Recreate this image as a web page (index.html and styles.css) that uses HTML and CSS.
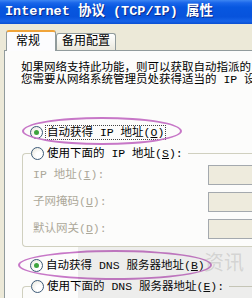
FILE: index.html
```html
<!DOCTYPE html>
<html lang="zh-CN">

<head>
  <meta charset="UTF-8">
  <meta name="viewport" content="width=device-width, initial-scale=1.0">
  <title>Internet 协议 (TCP/IP) 属性</title>
  <link rel="stylesheet" href="styles.css">
</head>

<body>
  <div class="window">
    <div class="titlebar">Internet 协议 (TCP/IP) 属性</div>
    <div class="dialog">
      <div class="tabs">
        <div class="tab active">常规</div>
        <div class="tab">备用配置</div>
      </div>
      <div class="panel">
        <p class="intro">如果网络支持此功能，则可以获取自动指派的 IP 设置。否则，<br>您需要从网络系统管理员处获得适当的 IP 设置。</p>

        <div class="option first">
          <span class="radio checked"></span>
          <span class="focus">自动获得 IP 地址(<u>O</u>)</span>
          <span class="ring ring-ip"></span>
        </div>

        <fieldset class="group">
          <legend class="option"><span class="radio"></span>使用下面的 IP 地址(<u>S</u>):</legend>
          <div class="field"><label>IP 地址(<u>I</u>):</label><span class="box"></span></div>
          <div class="field"><label>子网掩码(<u>U</u>):</label><span class="box"></span></div>
          <div class="field"><label>默认网关(<u>D</u>):</label><span class="box"></span></div>
        </fieldset>

        <div class="option dns">
          <span class="radio checked"></span>
          <span>自动获得 DNS 服务器地址(<u>B</u>)</span>
          <span class="ring ring-dns"></span>
        </div>

        <fieldset class="group last">
          <legend class="option"><span class="radio"></span>使用下面的 DNS 服务器地址(<u>E</u>):</legend>
        </fieldset>
      </div>
    </div>
    <div class="watermark">资讯</div>
  </div>
</body>

</html>
```

FILE: styles.css
```css
html,
body {
  margin: 0;
  padding: 0;
  width: 252px;
  height: 298px;
  overflow: hidden;
  background: #ece9d8;
}

.window {
  position: relative;
  width: 380px;
  height: 298px;
  font-family: "Liberation Mono", "Noto Sans CJK SC", monospace;
  font-size: 11.5px;
  line-height: 12px;
  color: #000;
}

.titlebar {
  height: 24px;
  padding-left: 5px;
  display: flex;
  align-items: center;
  font-size: 13.5px;
  font-weight: bold;
  color: #fff;
  text-shadow: 1px 1px 0 #0a2b8c;
  white-space: nowrap;
  background: linear-gradient(to bottom, #3d86f2 0%, #1a66ea 12%, #0757e0 30%, #0753dc 70%, #1663e8 88%, #0b4fd2 100%);
}

.dialog {
  padding: 5px 0 0 4px;
  background: #ece9d8;
}

.tabs {
  display: flex;
  align-items: flex-end;
  height: 21px;
  padding-left: 2px;
}

.tab {
  height: 16px;
  padding: 0 5px;
  display: flex;
  align-items: center;
  border: 1px solid #919b9c;
  border-bottom: none;
  border-radius: 3px 3px 0 0;
  background: linear-gradient(to bottom, #ffffff, #f3f2ec 60%, #e9e7dc);
  font-size: 12px;
  white-space: nowrap;
}

.tab.active {
  position: relative;
  z-index: 1;
  height: 19px;
  width: 39px;
  padding: 0 0 0 9px;
  margin-bottom: -1px;
  border-top: 2px solid #f0a43a;
  background: #fcfcfe;
}

.panel {
  height: 300px;
  border: 1px solid #919b9c;
  border-right: none;
  background: #fcfcfb;
}

.intro {
  margin: 11px 0 0 16px;
  white-space: nowrap;
}

.option {
  position: relative;
  display: flex;
  align-items: center;
  height: 21px;
  margin-left: 25px;
  white-space: nowrap;
}

.option.first {
  margin-top: 36px;
}

.option.dns {
  margin-top: 8px;
}

.radio {
  width: 11px;
  height: 11px;
  margin-right: 3px;
  border: 1px solid #3c5a78;
  border-radius: 50%;
  background: radial-gradient(circle at 65% 65%, #ffffff 30%, #e4e2d6 100%);
  display: flex;
  align-items: center;
  justify-content: center;
  flex-shrink: 0;
}

.radio.checked::after {
  content: "";
  width: 5px;
  height: 5px;
  border-radius: 50%;
  background: #3ea43e;
}

.focus {
  padding: 1px 1px 0;
  outline: 1px dotted #444;
}

.ring {
  position: absolute;
  border: 2px solid #c777c7;
  border-radius: 50%;
  pointer-events: none;
}

.ring-ip {
  left: -8px;
  top: -5px;
  width: 156px;
  height: 24px;
}

.ring-dns {
  left: -12px;
  top: -5px;
  width: 190px;
  height: 26px;
}

.group {
  margin: 0 0 0 17px;
  padding: 0 0 7px 10px;
  border: 1px solid #d0d0bf;
  border-right: none;
  border-radius: 4px 0 0 4px;
}

.group.last {
  padding-bottom: 40px;
}

.group legend {
  margin-left: -2px;
  padding: 0 5px 0 0;
}

.field {
  display: flex;
  align-items: center;
  height: 20px;
  margin-top: 7px;
  color: #aca899;
  white-space: nowrap;
}

.field:first-of-type {
  margin-top: 1px;
}

.field label {
  width: 175px;
}

.box {
  width: 120px;
  height: 18px;
  border: 1px solid #a4a9ae;
  background: #eeebdd;
}

.watermark {
  position: absolute;
  left: 78px;
  top: 247px;
  width: 174px;
  height: 51px;
  padding: 6px 8px 0 0;
  box-sizing: border-box;
  background: rgba(110, 110, 110, 0.1);
  color: rgba(150, 150, 150, 0.3);
  font-size: 20px;
  line-height: 24px;
  text-align: right;
  pointer-events: none;
}
```
